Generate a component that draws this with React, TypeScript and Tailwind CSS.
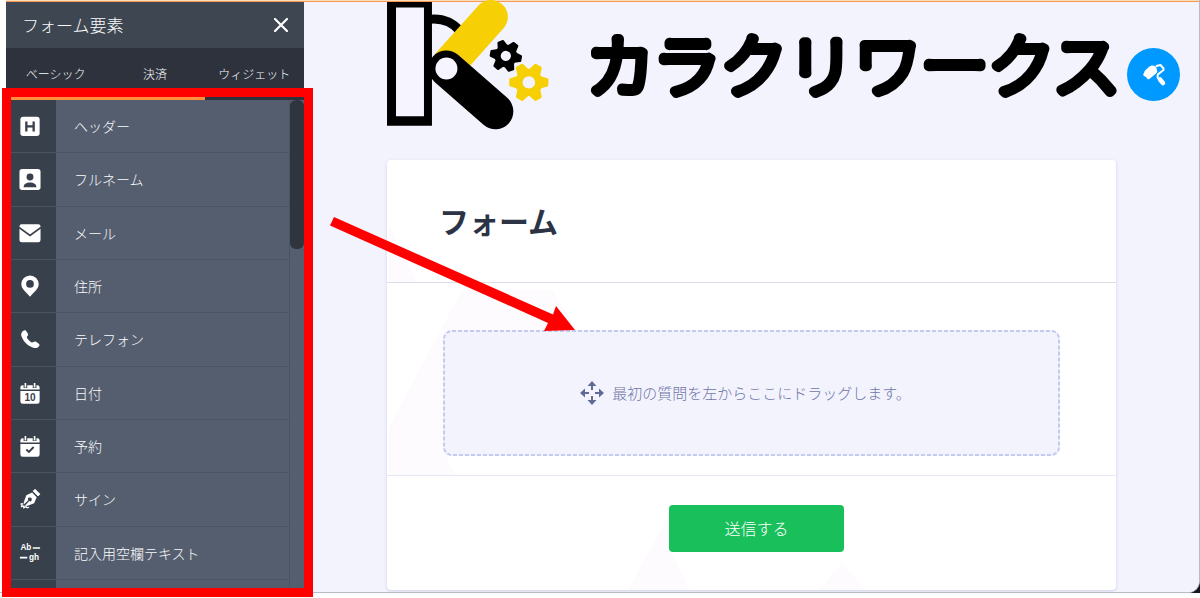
import type { ReactNode } from "react";

interface FormElement {
  label: string;
  icon: ReactNode;
}

const TABS = ["ベーシック", "決済", "ウィジェット"];

const GEAR_TEETH = [0, 60, 120, 180, 240, 300];

const ELEMENTS: FormElement[] = [
  {
    label: "ヘッダー",
    icon: (
      <>
        <rect x="1.500" y="2" width="21" height="21" rx="3" fill="currentColor" />
        <path d="M8 7v11M16 7v11M8 12.500h8" stroke="#38404b" strokeWidth="2.500" />
      </>
    ),
  },
  {
    label: "フルネーム",
    icon: (
      <>
        <rect x="0.500" y="1" width="23" height="23" rx="3" fill="currentColor" />
        <circle cx="12" cy="9.800" r="3.800" fill="#38404b" />
        <path d="M5 21c0-3.600 3-5.300 7-5.300s7 1.700 7 5.300z" fill="#38404b" />
      </>
    ),
  },
  {
    label: "メール",
    icon: (
      <>
        <rect x="0.500" y="2.500" width="23" height="19.500" rx="2.500" fill="currentColor" />
        <path d="M0 6l12 8.600L24 6" stroke="#38404b" strokeWidth="1.800" fill="none" />
      </>
    ),
  },
  {
    label: "住所",
    icon: (
      <path
        fillRule="evenodd"
        fill="currentColor"
        d="M12 0.500a9.500 9.500 0 0 0-9.500 9.500c0 5.500 6 8.800 9.500 13.800 3.500-5 9.500-8.300 9.500-13.800A9.500 9.500 0 0 0 12 0.500zm0 5a4.200 4.200 0 1 1 0 8.400 4.200 4.200 0 0 1 0-8.400z"
      />
    ),
  },
  {
    label: "テレフォン",
    icon: (
      <path
        fill="currentColor"
        d="M3 4.800C4 3 6 1.700 7.400 2.700l2.200 3.200c.6 1.100.3 2.200-.5 3.100-.8.800-.6 1.500 0 2.400 1.100 1.700 2.500 3.100 4.200 4.100.9.500 1.600.5 2.300-.1 1-.8 2-.9 3-.3l3 2c1 .8.900 1.800.2 2.800-1.400 2-3.800 2.500-6.300 1.600C9 19 4.500 14.500 2.700 9 2.200 7.500 2.300 6 3 4.800z"
      />
    ),
  },
  {
    label: "日付",
    icon: (
      <>
        <CalendarShape />
        <text
          x="12"
          y="20.5"
          textAnchor="middle"
          fill="#38404b"
          fontSize="11"
          fontWeight="700"
          fontFamily="Liberation Sans, sans-serif"
        >
          10
        </text>
      </>
    ),
  },
  {
    label: "予約",
    icon: (
      <>
        <CalendarShape />
        <path d="M8 15.800l2.800 2.700 5.200-5.400" stroke="#38404b" strokeWidth="2" fill="none" />
      </>
    ),
  },
  {
    label: "サイン",
    icon: (
      <>
        <path
          fillRule="evenodd"
          fill="currentColor"
          d="M14.300 4.800l5 5.200-2.800 6.500-7.800 3.200-2.200-.3 4.600-5.100a2 2 0 1 0-1-1L5.300 18l-.2-2.200L8 8z"
        />
        <path d="M15.500 3.400l2-2 5.300 5.300-2 2z" fill="currentColor" stroke="currentColor" strokeLinejoin="round" />
        <path
          d="M2 17.500l1.800-.5L2.500 20.500l3-1-.5 2.200 2.700-1.400c.6 1.200 1.200 1.600 2.800.7"
          stroke="currentColor"
          strokeWidth="1.300"
          fill="none"
          strokeLinejoin="round"
          strokeLinecap="round"
        />
      </>
    ),
  },
  {
    label: "記入用空欄テキスト",
    icon: (
      <>
        <g fill="currentColor" fontSize="9" fontWeight="700" fontFamily="Liberation Sans, sans-serif">
          <text x="1.500" y="9">Ab</text>
          <text x="11" y="20">gh</text>
        </g>
        <path d="M15 6.500h8M1 17h8" stroke="currentColor" strokeWidth="1.800" />
      </>
    ),
  },
];

function CalendarShape() {
  return (
    <>
      <path
        fill="currentColor"
        d="M4 3.500h16A2.500 2.500 0 0 1 22.500 6v2.200h-21V6A2.500 2.500 0 0 1 4 3.500zM1.500 9.700h21v11.500a2.500 2.500 0 0 1-2.500 2.500H4a2.500 2.500 0 0 1-2.500-2.500z"
      />
      <path d="M7 1v5.500M17 1v5.500" stroke="#38404b" strokeWidth="4" />
      <path d="M7 1v5M17 1v5" stroke="currentColor" strokeWidth="1.800" />
    </>
  );
}

function Gear({ x, y, size, turn, color }: { x: number; y: number; size: number; turn: number; color: string }) {
  return (
    <g transform={`translate(${x} ${y}) rotate(${turn}) scale(${size})`}>
      <circle r="10" fill="none" stroke={color} strokeWidth="7.500" />
      {GEAR_TEETH.map((deg) => (
        <path
          key={deg}
          d="M11 -6.500L18.500 -4.200Q19.600 -3.800 19.600 -2.800V2.800Q19.600 3.800 18.500 4.200L11 6.500z"
          fill={color}
          transform={`rotate(${deg})`}
        />
      ))}
    </g>
  );
}

function BrandLogo() {
  return (
    <svg viewBox="0 0 730 130" className="block w-full overflow-visible" role="img" aria-label="カラクリワークス">
      <path d="M41 17.500Q61 15 73 29" stroke="#000" strokeWidth="9" fill="none" />
      <path d="M62 62L104 15" stroke="#f6d004" strokeWidth="34" strokeLinecap="round" />
      <path d="M59.500 66.500L108.500 109.500" stroke="#000" strokeWidth="36" strokeLinecap="round" />
      <circle cx="59.500" cy="66.500" r="11" fill="#f6f5ff" />
      <path d="M0 0h45v124H0z" fill="#000" />
      <path d="M9 5.500h28v109H9z" fill="#f6f5ff" />
      <Gear x={119} y={54} size={0.82} turn={10} color="#000" />
      <Gear x={142} y={80.5} size={1} turn={0} color="#f6d004" />
      <text
        x="200"
        y="89"
        fontSize="67"
        fontWeight="100"
        fontFamily="Noto Sans CJK JP, sans-serif"
        stroke="#000"
        strokeWidth="10"
        strokeLinejoin="round"
      >
        カラクリワークス
      </text>
    </svg>
  );
}

function Sidebar() {
  return (
    <aside className="flex w-[298px] shrink-0 flex-col bg-[#555e6f] text-gray-50">
      <div className="flex h-[46px] items-center justify-between bg-[#3e4651] px-4">
        <h2 className="text-[17px]">フォーム要素</h2>
        <button type="button" aria-label="閉じる" className="text-white">
          <svg viewBox="0 0 14 14" className="size-[14px]">
            <path d="M1 1l12 12M13 1L1 13" stroke="currentColor" strokeWidth="2.200" strokeLinecap="round" />
          </svg>
        </button>
      </div>

      <div className="h-[52px] bg-[#2d323d]">
        <div className="grid h-full grid-cols-3">
          {TABS.map((tab) => (
            <button key={tab} type="button" className="text-xs">
              {tab}
            </button>
          ))}
        </div>
      </div>
      {/* Active indicator */}
      <div className="-mt-1 h-1">
        <div className="h-full w-2/3 bg-[#ff8f3c]" />
      </div>

      <div className="flex h-[488px] overflow-hidden">
        <div className="flex-1">
          <ul className="grid h-[480px] grid-rows-9">
            {ELEMENTS.map((el) => (
              <li key={el.label} className="flex border-b border-[#4a5563]">
                <span className="flex w-[50px] items-center justify-end bg-[#38404b] pr-[15px] text-white">
                  <svg viewBox="0 0 24 24" className="size-[22px]">
                    {el.icon}
                  </svg>
                </span>
                <span className="flex items-center pl-[18px] text-sm">{el.label}</span>
              </li>
            ))}
          </ul>
          <div className="h-2 w-[50px] bg-[#38404b]" />
        </div>
        <div className="w-[15px] border-l border-[#4a5563]">
          <div className="h-[149px] rounded-md bg-[#2f343d]" />
        </div>
      </div>
    </aside>
  );
}

function FormCard() {
  return (
    <form className="relative rounded-sm bg-white shadow-[0_1px_3px_rgba(90,95,150,0.25)]" onSubmit={(e) => e.preventDefault()}>
      {/* Faint triangles behind the form */}
      <svg viewBox="0 0 729 430" className="pointer-events-none absolute inset-0 size-full" fill="#fdfbfd">
        <path d="M2 65L30 123H2z" />
        <path d="M75 130L2 267V315H68L57 292V170H190L165 130z" />
        <path d="M241 430L282 355V392H284L303 430z" />
        <path d="M433 430L450 408Q455 402 459 406L477 430z" />
      </svg>

      <header className="relative flex h-[123px] items-center border-b border-[#dcdde9] px-[52px]">
        <h1 className="text-[30px] font-bold text-[#2c3345]">フォーム</h1>
      </header>

      <div className="relative border-b border-[#e6e6f5] px-14 pt-[47px] pb-[19px]">
        <div className="relative flex h-[126px] items-center justify-center gap-2 rounded-lg bg-[#f3f3fe] pr-3 text-[#6f76a7]">
          <svg className="absolute inset-0 size-full">
            <rect
              x="1"
              y="1"
              rx="8"
              className="h-[calc(100%-2px)] w-[calc(100%-2px)]"
              fill="none"
              stroke="#c5cbee"
              strokeWidth="2"
              strokeDasharray="4 2"
            />
          </svg>
          <svg viewBox="0 0 24 24" className="size-6" fill="#616a94">
            <path d="M12 0l4.500 5h-9zM12 24l4.500-5h-9zM0 12l5-4.500v9zM24 12l-5-4.500v9z" />
            <path d="M11 4h2v5h-2zM11 15h2v5h-2zM4 11h5v2H4zM15 11h5v2h-5z" />
          </svg>
          <p className="text-[15px]">最初の質問を左からここにドラッグします。</p>
        </div>
      </div>

      <div className="relative flex justify-center pt-[29px] pb-[38px] pl-[10px]">
        <button type="submit" className="h-[47px] w-[175px] rounded-sm bg-[#19bf5b] text-base text-white">
          送信する
        </button>
      </div>
    </form>
  );
}

export default function App() {
  return (
    <div className="relative min-h-screen overflow-hidden bg-white font-['Noto_Sans_CJK_JP',sans-serif] font-light">
      <div className="bg-linear-to-r from-white from-50% to-[#15151d] to-50%">
        <div className="overflow-hidden rounded-br-xl border-r border-b border-[#b9bac4] bg-white pl-[6px]">
          <div className="h-[2px] border-b border-[#f79a56] bg-[#fbdcb8]" />
          <div className="flex">
            <Sidebar />
            <main className="relative flex-1 bg-[#f3f3fe] pb-[2px]">
              <div className="mx-auto flex max-w-[729px] flex-col gap-7">
                <BrandLogo />
                <FormCard />
              </div>
              <button
                type="button"
                aria-label="フォームデザイナー"
                className="absolute top-[46px] right-[19px] size-[53px] rounded-full bg-[#0099ff]"
              >
                <svg viewBox="0 0 53 53" className="size-full" fill="none" stroke="#fff" strokeLinecap="round" strokeLinejoin="round">
                  <path d="M21.500 25.500L25.500 22" strokeWidth="9" />
                  <path d="M18 26.500L25 20M21.500 29.500L28.500 23.500" strokeWidth="3.500" />
                  <path d="M29.500 18L33.500 17L36.500 20.500V22L30.700 26.500V30" strokeWidth="2" />
                  <path d="M33 31.500L36 35" strokeWidth="4.500" />
                </svg>
              </button>
            </main>
          </div>
        </div>
      </div>

      {/* Callout frame and arrow */}
      <div className="pointer-events-none absolute top-[88px] left-[2px] h-[509px] w-[311px] border-[9px] border-[#ff0000]" />
      <svg viewBox="0 0 250 120" className="pointer-events-none absolute top-[215px] left-[328px] h-[120px] w-[250px]" fill="#ff0000">
        <path d="M6 2L225 99.500L228 91L247 115L216 116L220 108L2 10.500z" />
      </svg>
    </div>
  );
}
